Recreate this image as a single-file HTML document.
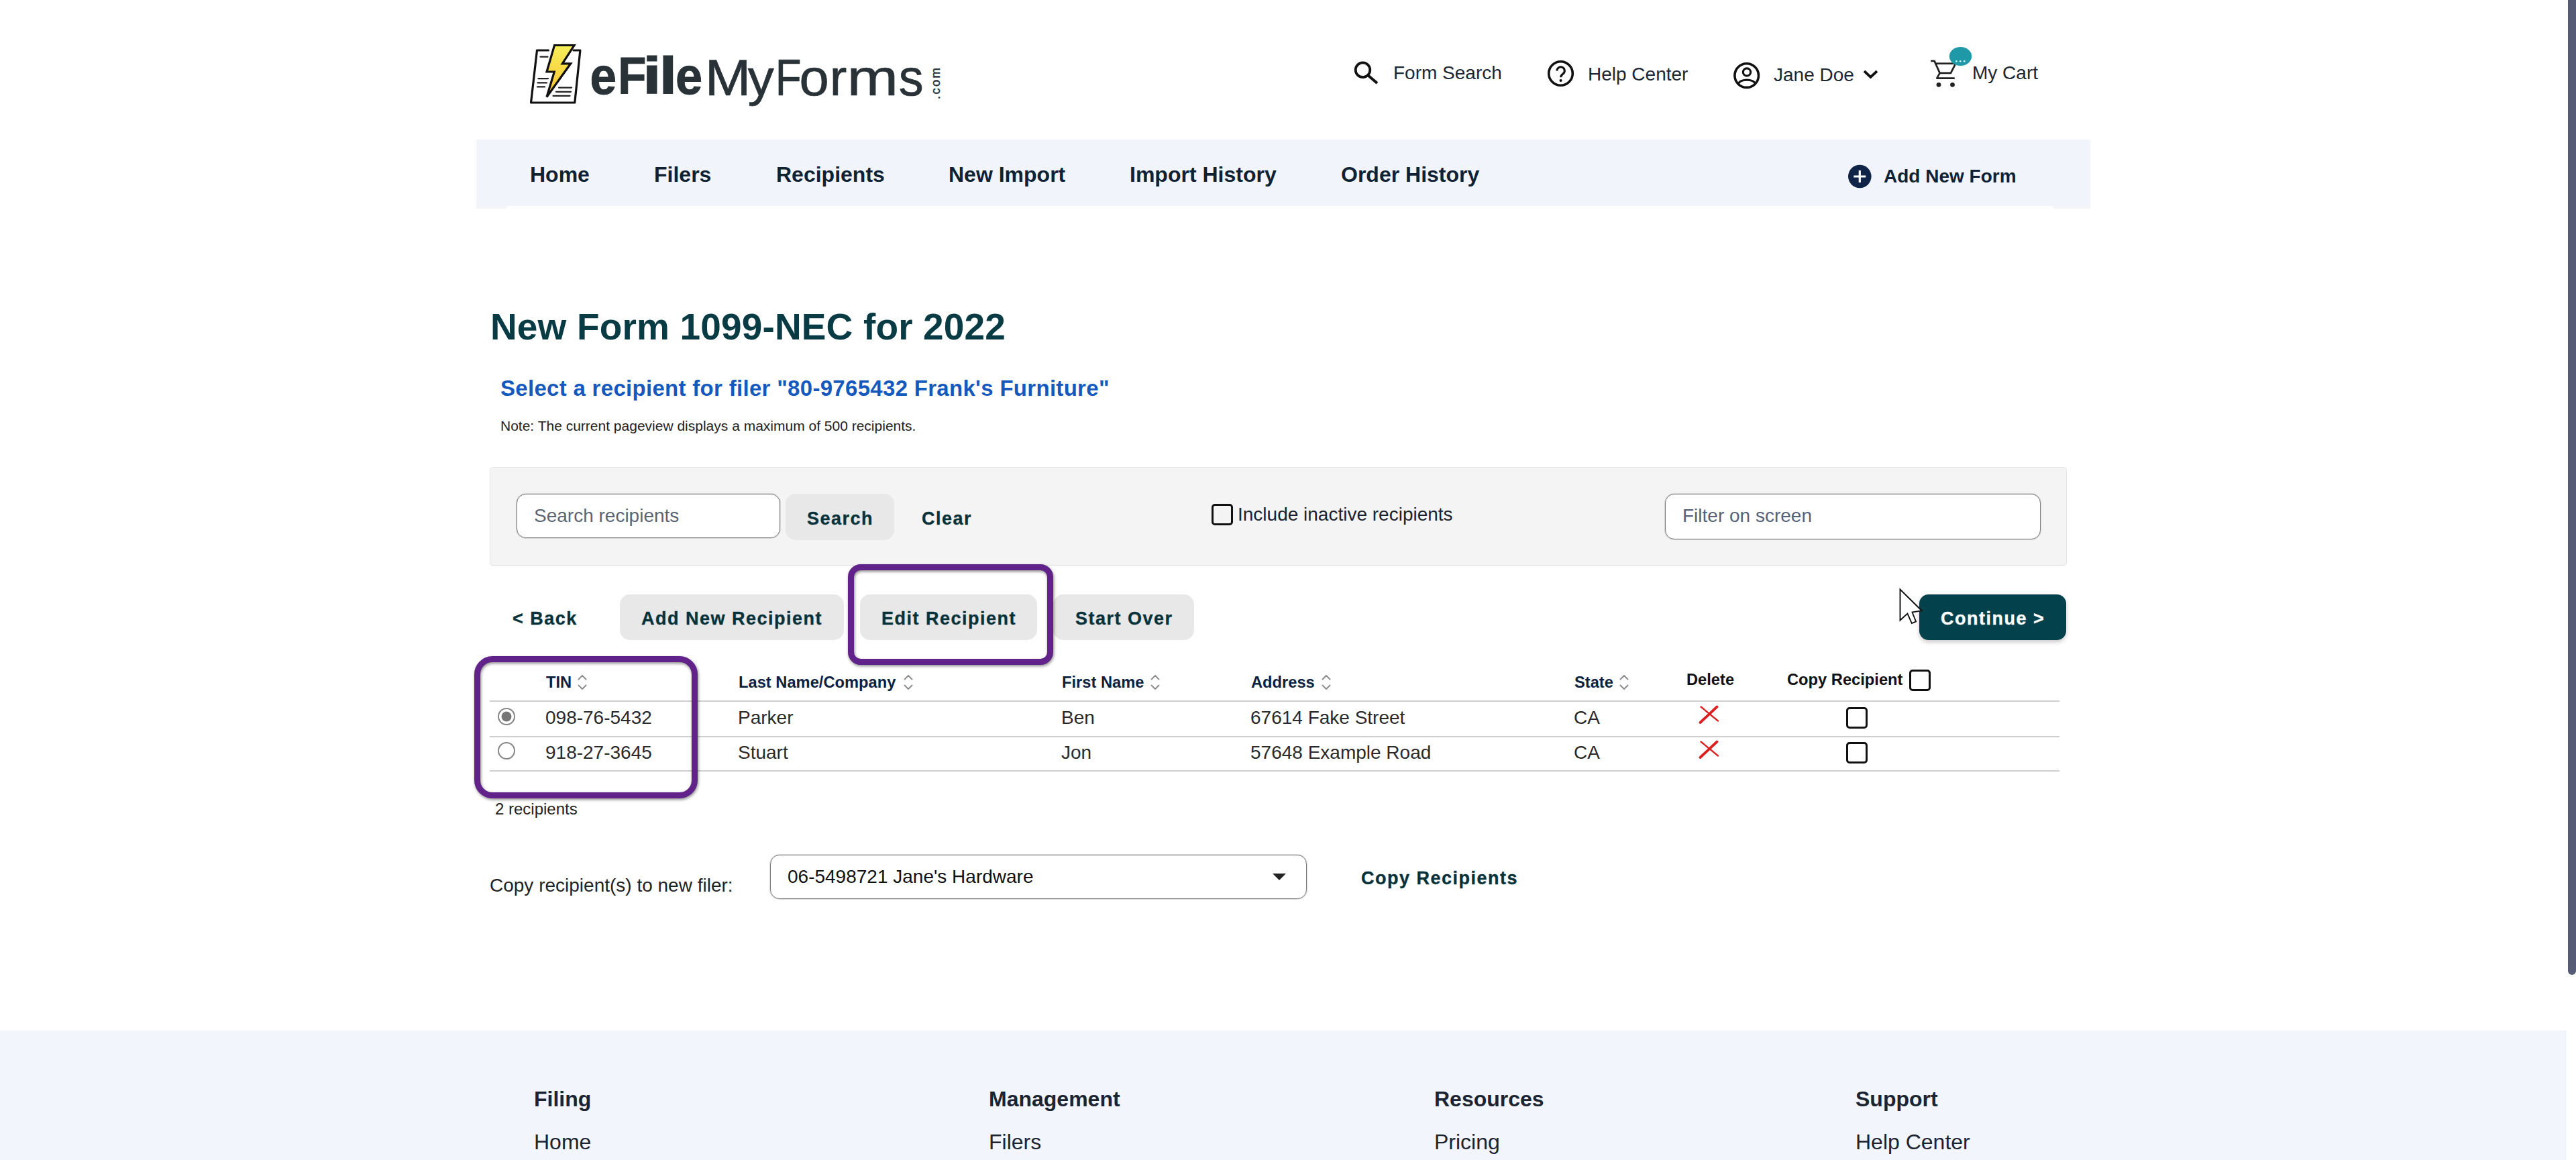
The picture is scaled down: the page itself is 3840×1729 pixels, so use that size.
<!DOCTYPE html>
<html>
<head>
<meta charset="utf-8">
<title>eFileMyForms</title>
<style>
html,body{margin:0;padding:0;}
body{width:3840px;height:1729px;overflow:hidden;background:#fff;position:relative;font-family:"Liberation Sans",sans-serif;color:#222;}
.t{position:absolute;white-space:nowrap;line-height:1;}
.b{font-weight:bold;}
.abs{position:absolute;}
/* nav */
#nav{left:710px;top:208px;width:2406px;height:99px;background:#f1f4fb;}
.nav{font-size:32px;font-weight:bold;color:#0f2233;top:244px;}
.top{font-size:28px;color:#1b2733;top:95px;}
/* panel */
#panel{left:730px;top:696px;width:2351px;height:147px;background:#f4f4f4;border:1px solid #e6e6e6;border-radius:5px;box-shadow:0 1px 1px rgba(0,0,0,.06);box-sizing:border-box;}
.inp{background:#fff;border:1px solid #7c7c7c;box-shadow:0 0 0 1px rgba(124,124,124,.28);border-radius:14px;box-sizing:border-box;}
.btn{background:#e8e8e8;border-radius:15px;}
.btxt{font-size:27px;font-weight:bold;color:#08323a;letter-spacing:1.5px;-webkit-text-stroke:0.35px;}
.hl{border:9px solid #61238a;border-radius:19px;box-sizing:border-box;filter:drop-shadow(1.5px 2.5px 2px rgba(0,0,0,.45));}
.th{font-size:23.7px;font-weight:bold;color:#0d2240;top:1006px;}
.td{font-size:28px;color:#2a2a2a;}
.line{left:730px;width:2340px;height:2px;background:#cfcfcf;}
.cb{width:26px;height:26px;border:3px solid #111;border-radius:5px;background:#fff;}
#footer{left:0;top:1536px;width:3826px;height:193px;background:#f2f5fc;}
.fh{font-size:32px;font-weight:bold;color:#1b2430;top:1622px;}
.fl{font-size:32px;color:#1b2430;top:1686px;}
</style>
</head>
<body>

<!-- LOGO -->
<svg class="abs" style="left:780px;top:55px;" width="640" height="115" viewBox="780 55 640 115">
<defs><linearGradient id="bg" x1="0" y1="0" x2="0" y2="1"><stop offset="0" stop-color="#f6ee5a"/><stop offset="1" stop-color="#f9c32e"/></linearGradient></defs>
<path d="M817.5 75 L800.5 75 L791.5 153 L856.8 153 L864.9 75 L855 75" fill="#fff" stroke="#111" stroke-width="3.2" stroke-linejoin="round" stroke-linecap="round"/>
<g stroke="#222" stroke-width="2.3" stroke-linecap="round">
<path d="M805.5 84.6H816.5M802.5 117.2H817M801.5 123.4H815M801 129.4H812M833 130.6H852M829 136.8H851M824.5 142.8H849.5"/>
</g>
<path d="M826.5 67.5 L856 67.5 L838.3 94.8 L850.7 94.8 L815 144.5 L826.3 107 L815 107 Z" fill="url(#bg)" stroke="#111" stroke-width="3.2" stroke-linejoin="miter"/>
<!--LT--><g font-family="Liberation Sans, sans-serif" fill="#283237">
<text transform="translate(879.56,140) scale(0.906,1)" font-size="78.5" font-weight="bold" stroke="#283237" stroke-width="1">e</text>
<text transform="translate(921.34,140) scale(0.879,1)" font-size="78.5" font-weight="bold" stroke="#283237" stroke-width="1">F</text>
<text transform="translate(957.67,140) scale(1.297,1)" font-size="78.5" font-weight="bold" stroke="#283237" stroke-width="1">i</text>
<text transform="translate(982.13,140) scale(1.251,1)" font-size="78.5" font-weight="bold" stroke="#283237" stroke-width="1">l</text>
<text transform="translate(1007.12,140) scale(0.919,1)" font-size="78.5" font-weight="bold" stroke="#283237" stroke-width="1">e</text>
<text transform="translate(1050.95,141.5) scale(1.076,1)" font-size="76" stroke="#283237" stroke-width="0.7">M</text>
<text transform="translate(1114.81,141.5) scale(1.026,1)" font-size="76" stroke="#283237" stroke-width="0.7">y</text>
<text transform="translate(1155.75,141.5) scale(0.837,1)" font-size="76" stroke="#283237" stroke-width="0.7">F</text>
<text transform="translate(1191.62,141.5) scale(1.047,1)" font-size="76" stroke="#283237" stroke-width="0.7">o</text>
<text transform="translate(1236.82,141.5) scale(1.011,1)" font-size="76" stroke="#283237" stroke-width="0.7">r</text>
<text transform="translate(1262.83,141.5) scale(1.203,1)" font-size="76" stroke="#283237" stroke-width="0.7">m</text>
<text transform="translate(1339.67,141.5) scale(0.971,1)" font-size="76" stroke="#283237" stroke-width="0.7">s</text>
<text transform="translate(1400.8,148) rotate(-90)" font-size="18.5" stroke="#283237" stroke-width="0.5" textLength="47" lengthAdjust="spacing">.com</text>
</g><!--/LT-->
</svg>

<!-- top right links -->
<div class="t top" style="left:2077px;">Form Search</div>
<div class="t top" style="left:2367px;top:97px;">Help Center</div>
<div class="t top" style="left:2644px;top:98px;">Jane Doe</div>
<div class="t top" style="left:2940px;top:95px;">My Cart</div>

<!-- icons -->
<svg class="abs" style="left:2000px;top:60px;" width="1100" height="90" viewBox="2000 60 1100 90" fill="none" stroke="#111" stroke-linecap="butt">
<circle cx="2031.5" cy="104.2" r="10.8" stroke-width="3.8"/>
<path d="M2039.5 112.5 L2053 124" stroke-width="4.2"/>
<circle cx="2326.5" cy="109.5" r="17.8" stroke-width="3.6"/>
<path d="M2320.9 105.6 a5.7 5.7 0 1 1 9.1 4.5 c-2.6 1.9 -3.4 3 -3.4 5.2" stroke-width="3.1"/>
<circle cx="2326.6" cy="120" r="2.1" fill="#111" stroke="none"/>
<circle cx="2603.7" cy="112.6" r="17.8" stroke-width="3.6"/>
<circle cx="2604" cy="107.5" r="5.6" stroke-width="3.2"/>
<path d="M2591 125.5 c3 -8.5 23 -8.5 26 0" stroke-width="3.2"/>
<path d="M2779 106 L2788.5 115 L2798 106" stroke-width="3.8"/>
<g stroke="#222" stroke-width="2.7" stroke-linejoin="round">
<path d="M2878.2 90.9 H2883.6 L2891.6 108.9 H2908 L2914.5 96.2"/>
<path d="M2886 94.7 H2915.5"/>
<path d="M2891.6 108.9 L2887.3 116.6 H2913.8"/>
</g>
<circle cx="2890" cy="126.3" r="3.4" fill="#222" stroke="none"/>
<circle cx="2910.5" cy="126.3" r="3.4" fill="#222" stroke="none"/>
<ellipse cx="2922.5" cy="84" rx="16.6" ry="14" fill="#1f99a7" stroke="none"/>
<g fill="#d4f7fb" stroke="none"><circle cx="2916.4" cy="91.2" r="1.3"/><circle cx="2922.2" cy="91.2" r="1.3"/><circle cx="2928.2" cy="91.2" r="1.3"/></g>
</svg>
<!-- NAV -->
<div id="nav" class="abs"></div>
<div class="abs" style="left:710px;top:307px;width:46px;height:4px;background:#f5f6f9;"></div>
<div class="abs" style="left:3060px;top:307px;width:56px;height:4px;background:#f5f6f9;"></div>
<svg class="abs" style="left:2750px;top:241px;" width="44" height="44" viewBox="0 0 44 44">
<circle cx="22.3" cy="22" r="17.3" fill="#0f2446"/>
<path d="M22.3 13V31M13.3 22H31.3" stroke="#fff" stroke-width="3.2"/>
</svg>
<div class="t nav" style="left:790px;">Home</div>
<div class="t nav" style="left:975px;">Filers</div>
<div class="t nav" style="left:1157px;">Recipients</div>
<div class="t nav" style="left:1414px;">New Import</div>
<div class="t nav" style="left:1684px;">Import History</div>
<div class="t nav" style="left:1999px;">Order History</div>
<div class="t nav" style="left:2808px;font-size:28px;top:249px;">Add New Form</div>

<!-- Headings -->
<div class="t b" style="left:731px;top:460px;font-size:55px;color:#083b43;letter-spacing:0.15px;">New Form 1099-NEC for 2022</div>
<div class="t b" style="left:746px;top:562px;font-size:33px;color:#1559bd;letter-spacing:0.3px;">Select a recipient for filer "80-9765432 Frank's Furniture"</div>
<div class="t" style="left:746px;top:624px;font-size:21px;color:#222;">Note: The current pageview displays a maximum of 500 recipients.</div>

<!-- Search panel -->
<div id="panel" class="abs"></div>
<div class="abs inp" style="left:770px;top:736px;width:393px;height:66px;"></div>
<div class="t" style="left:796px;top:755px;font-size:28px;color:#5a6472;">Search recipients</div>
<div class="abs btn" style="left:1171px;top:736px;width:162px;height:69px;"></div>
<div class="t btxt" style="left:1203px;top:760px;">Search</div>
<div class="t btxt" style="left:1374px;top:760px;">Clear</div>
<div class="abs cb" style="left:1806px;top:751px;background:transparent;"></div>
<div class="t" style="left:1845px;top:753px;font-size:28px;color:#1a2230;">Include inactive recipients</div>
<div class="abs inp" style="left:2482px;top:736px;width:560px;height:68px;"></div>
<div class="t" style="left:2508px;top:755px;font-size:28px;color:#56617a;">Filter on screen</div>

<!-- Button row -->
<div class="t btxt" style="left:764px;top:909px;">&lt; Back</div>
<div class="abs btn" style="left:924px;top:886px;width:334px;height:68px;"></div>
<div class="t btxt" style="left:956px;top:909px;">Add New Recipient</div>
<div class="abs btn" style="left:1282px;top:886px;width:264px;height:68px;"></div>
<div class="t btxt" style="left:1314px;top:909px;">Edit Recipient</div>
<div class="abs btn" style="left:1570px;top:886px;width:210px;height:68px;"></div>
<div class="t btxt" style="left:1603px;top:909px;">Start Over</div>
<div class="abs" style="left:2861px;top:886px;width:219px;height:68px;background:#03414c;border-radius:14px;box-shadow:0 3px 6px rgba(0,0,0,.22);"></div>
<div class="t btxt" style="left:2893px;top:909px;color:#fff;">Continue &gt;</div>

<!-- Table -->
<div class="t th" style="left:814px;">TIN</div>
<div class="t th" style="left:1101px;">Last Name/Company</div>
<div class="t th" style="left:1583px;">First Name</div>
<div class="t th" style="left:1865px;">Address</div>
<div class="t th" style="left:2347px;">State</div>
<div class="t th" style="left:2514px;top:1002px;color:#111;">Delete</div>
<div class="t th" style="left:2664px;top:1002px;color:#111;">Copy Recipient</div>
<div class="abs cb" style="left:2846px;top:998px;"></div>
<svg class="abs" style="left:0;top:1000px;" width="3840" height="140" viewBox="0 1000 3840 140" fill="none">
<g stroke="#8c8c8c" stroke-width="1.9" stroke-linecap="round" stroke-linejoin="round">
<path id="so" d="M862.5 1012.5 l5.5 -5.5 l5.5 5.5 M862.5 1021.5 l5.5 5.5 l5.5 -5.5"/>
<use href="#so" x="486"/><use href="#so" x="854"/><use href="#so" x="1109"/><use href="#so" x="1553"/>
</g>
<g stroke="#dc2020" stroke-linecap="round">
<path d="M2535.5 1053.5 L2561 1074.5" stroke-width="2.3"/><path d="M2559.5 1053.5 L2534.5 1077" stroke-width="3.8"/>
<path d="M2535.5 1105.5 L2561 1126.5" stroke-width="2.3"/><path d="M2559.5 1105.5 L2534.5 1129" stroke-width="3.8"/>
</g>
<circle cx="755" cy="1068" r="12" fill="#fff" stroke="#868686" stroke-width="2"/>
<circle cx="755" cy="1068" r="7.5" fill="#767676"/>
<circle cx="755" cy="1119" r="12" fill="#fff" stroke="#868686" stroke-width="2"/>
</svg>

<div class="abs line" style="top:1044px;"></div>
<div class="abs line" style="top:1097px;"></div>
<div class="abs line" style="top:1148px;"></div>

<div class="t td" style="left:813px;top:1056px;">098-76-5432</div>
<div class="t td" style="left:1100px;top:1056px;">Parker</div>
<div class="t td" style="left:1582px;top:1056px;">Ben</div>
<div class="t td" style="left:1864px;top:1056px;">67614 Fake Street</div>
<div class="t td" style="left:2346px;top:1056px;">CA</div>
<div class="abs cb" style="left:2752px;top:1054px;"></div>

<div class="t td" style="left:813px;top:1108px;">918-27-3645</div>
<div class="t td" style="left:1100px;top:1108px;">Stuart</div>
<div class="t td" style="left:1582px;top:1108px;">Jon</div>
<div class="t td" style="left:1864px;top:1108px;">57648 Example Road</div>
<div class="t td" style="left:2346px;top:1108px;">CA</div>
<div class="abs cb" style="left:2752px;top:1106px;"></div>

<div class="t" style="left:738px;top:1194px;font-size:24px;color:#222;">2 recipients</div>

<!-- Highlights -->
<div class="abs hl" style="left:1264px;top:841px;width:306px;height:150px;"></div>
<div class="abs hl" style="left:707px;top:978px;width:333px;height:212px;border-radius:27px;"></div>

<!-- cursor -->
<svg class="abs" style="left:2827px;top:870px;" width="50" height="70" viewBox="-5 -6 50 70">
<path d="M0.5 2.5 L0.5 48.5 L11.4 38.6 L17.9 53.1 L24.1 50.4 L18.5 36.5 L32.7 34.2 Z" fill="#fff" stroke="#111" stroke-width="1.9" stroke-linejoin="miter"/>
</svg>

<!-- Copy row -->
<div class="t" style="left:730px;top:1306px;font-size:28px;color:#222;">Copy recipient(s) to new filer:</div>
<div class="abs inp" style="left:1148px;top:1274px;width:800px;height:66px;"></div>
<div class="t" style="left:1174px;top:1293px;font-size:28px;color:#111;">06-5498721 Jane's Hardware</div>
<svg class="abs" style="left:1895px;top:1299px;" width="24" height="16" viewBox="0 0 24 16"><path d="M2 3 H22 L12 13 Z" fill="#222"/></svg>
<div class="t btxt" style="left:2029px;top:1296px;">Copy Recipients</div>

<!-- Footer -->
<div id="footer" class="abs"></div>
<div class="t fh" style="left:796px;">Filing</div>
<div class="t fh" style="left:1474px;">Management</div>
<div class="t fh" style="left:2138px;">Resources</div>
<div class="t fh" style="left:2766px;">Support</div>
<div class="t fl" style="left:796px;">Home</div>
<div class="t fl" style="left:1474px;">Filers</div>
<div class="t fl" style="left:2138px;">Pricing</div>
<div class="t fl" style="left:2766px;">Help Center</div>

<!-- Scrollbar -->
<div class="abs" style="left:3828px;top:0;width:12px;height:1453px;background:#565b76;border-radius:0 0 6px 6px;"></div>

</body>
</html>
